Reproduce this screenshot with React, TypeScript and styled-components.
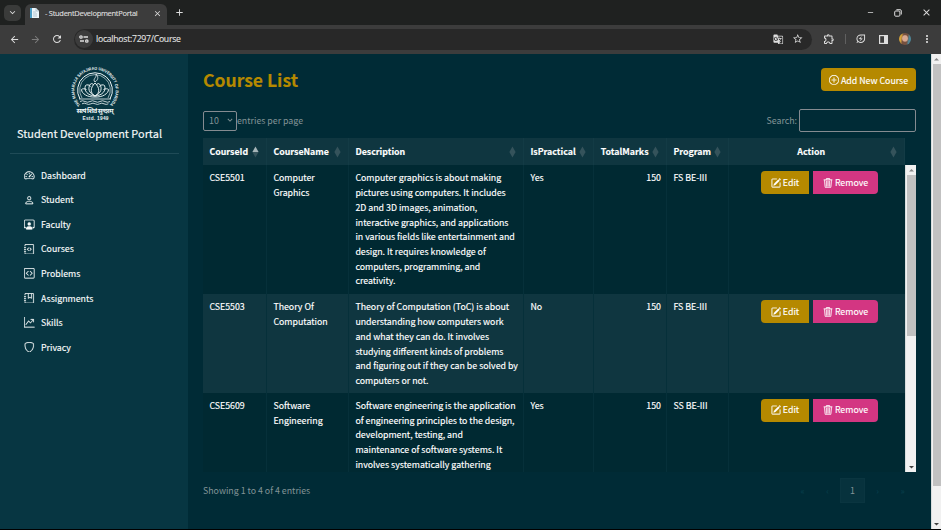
import React from "react";
import styled, { createGlobalStyle } from "styled-components";
import {
  BsSpeedometer2, BsPerson, BsPersonWorkspace, BsJournalCode, BsCodeSquare, BsJournalBookmark,
  BsGraphUpArrow, BsShield, BsPlusCircle, BsPencilSquare, BsTrash3,
} from "react-icons/bs";
import {
  MdArrowBack, MdArrowForward, MdRefresh, MdStarBorder, MdGTranslate, MdOutlineExtension,
  MdMoreVert, MdClose, MdAdd, MdKeyboardArrowDown, MdRemove, MdOutlineEnergySavingsLeaf,
} from "react-icons/md";

const Global = createGlobalStyle`
  * { box-sizing: border-box; }
  body { margin: 0; background: #002b36; font-family: "Noto Sans CJK JP", "Noto Sans", sans-serif; }
  button, input { font: inherit; }
`;

const Window = styled.div`
  width: 941px; height: 530px; display: flex; flex-direction: column; overflow: hidden;
  border-bottom: 1px solid #000;
`;

/* ---- browser chrome ---- */
const TabBar = styled.div`
  height: 25px; flex: none; background: #1f2120; display: flex; align-items: center; color: #dcdcdc;
  font-family: "Open Sans", sans-serif;
`;
const TabSearch = styled.div`
  width: 17px; height: 16px; margin-left: 4px; border-radius: 5px; background: #3a3b3a;
  display: grid; place-items: center; font-size: 11px;
`;
const Tab = styled.div`
  width: 142px; height: 21px; margin: 4px 0 0 4px; padding: 0 5px 3px 4px; border-radius: 6px 6px 0 0;
  background: #3c3c3c; display: flex; align-items: center; font-size: 7.5px; letter-spacing: -0.28px;
  -webkit-text-stroke: 0.15px currentColor;
`;
const TabTitle = styled.span`flex: 1; margin-left: 5px; white-space: nowrap;`;
const Glyph = styled.span<{ $size: number; $w: number; $dim?: boolean }>`
  width: ${p => p.$w}px; flex: none; display: grid; place-items: center; font-size: ${p => p.$size}px;
  color: ${p => (p.$dim ? "#7d7d7d" : "#dedede")};
`;
const WindowButtons = styled.div`margin-left: auto; display: flex; padding-right: 1px;`;
const Toolbar = styled.div`
  height: 29px; flex: none; background: #3c3c3c; display: flex; align-items: center; padding: 0 0 1px 3px;
`;
const Address = styled.div`
  width: 738px; height: 21px; margin-left: 6px; border-radius: 11px; background: #282828; display: flex;
  align-items: center; color: #e4e4e4; font: 8.7px "Open Sans", sans-serif; padding: 0 4px 0 1px;
`;
const SiteInfo = styled.span`
  width: 18px; height: 18px; border-radius: 50%; background: #3c3c3c; display: grid; place-items: center;
`;
const Url = styled.span`flex: 1; margin-left: 3px; letter-spacing: -0.27px; -webkit-text-stroke: 0.1px currentColor;`;
const Divider = styled.span`width: 1px; height: 10px; background: #606060; margin-right: 4px;`;
const Avatar = styled.span`
  width: 12px; height: 12px; border-radius: 50%; margin: 0 5px;
  background: radial-gradient(ellipse at 50% 45%, #d8a891 0 28%, transparent 42%),
    linear-gradient(100deg, #d5a33a 0 20%, #75503f 35% 65%, #4e879a 80%);
`;

/* ---- page ---- */
const Page = styled.div`
  flex: 1; min-height: 0; display: flex; background: #002b36; -webkit-text-stroke: 0.15px currentColor;
`;
const Sidebar = styled.aside`
  width: 188px; flex: none; background: #073642; padding: 12px 9px 0 10px; color: #f7fafa;
`;
const Brand = styled.div`
  height: 88px; display: flex; flex-direction: column; align-items: center; border-bottom: 1px solid #1f4b57;
  svg { flex: none; }
`;
const BrandName = styled.div`font-size: 10.95px; line-height: 18px; margin: 2px 10px 0 0; white-space: nowrap;`;
const Nav = styled.nav`margin-top: 9px; padding-left: 14px;`;
const NavItem = styled.a`
  height: 24.55px; display: flex; align-items: center; gap: 6.5px; font-size: 8.8px;
  svg { font-size: 10.5px; stroke: currentColor; stroke-width: .3; }
`;
const Main = styled.main`flex: 1; padding: 14px 15px 0; display: flex; flex-direction: column;`;
const Heading = styled.div`display: flex; justify-content: space-between; height: 25px;`;
const Title = styled.h1`margin: -1px 0 0; color: #b58900; font-size: 17.55px; line-height: 25px; font-weight: 700;`;
const Button = styled.button<{ $kind: "gold" | "pink"; $w: number; $corners?: string }>`
  width: ${p => p.$w}px; height: 23px; border: 0; padding: 1px 0 0; color: #fff; font-size: 8.8px;
  border-radius: ${p => p.$corners ?? "4px"}; background: ${p => (p.$kind === "gold" ? "#b58900" : "#d33682")};
  display: flex; align-items: center; justify-content: center; gap: 2px; white-space: nowrap;
  svg { font-size: 10px; stroke: currentColor; stroke-width: .4; margin-top: -1px; }
`;
const Controls = styled.div`
  display: flex; justify-content: space-between; align-items: center; height: 23px; margin-top: 16px;
  color: #839496; font-size: 8.8px; -webkit-text-stroke: 0;
`;
const Group = styled.label`display: flex; align-items: center; line-height: 13px;`;
const Select = styled.span`
  width: 34px; height: 20px; border: 1px solid #858b91; border-radius: 2px; padding: 0 1px 1px 5px;
  display: flex; align-items: center; justify-content: space-between;
`;
const SearchInput = styled.input`
  width: 117px; height: 23px; margin-left: 2px; border: 1px solid #858b91; border-radius: 2px; background: transparent;
`;
const columns = "64px 82px 175px 70px 73px 62px 176px";
const HeadRow = styled.div`
  display: grid; grid-template-columns: ${columns}; width: 702px; height: 27px; margin-top: 6px; flex: none;
  background: #0f3640; color: #fff; font-size: 8.8px; font-weight: 700;
`;
const HeadCell = styled.div<{ $center?: boolean; $right?: boolean }>`
  display: flex; align-items: center; padding: 0 7px 0 6.4px; border-right: 1px solid #133b45;
  span { flex: 1; text-align: ${p => (p.$center ? "center" : p.$right ? "right" : "left")};
    padding-right: ${p => (p.$right ? 3.5 : p.$center ? 3 : 0)}px; }
`;
const SortIcon = styled.svg`width: 7px; height: 12px; flex: none;`;
const Viewport = styled.div`display: flex; height: 307px; flex: none; overflow: hidden;`;
const Body = styled.div`width: 702px; flex: none; overflow: hidden;`;
const Row = styled.div<{ $alt?: boolean; $h: number }>`
  display: grid; grid-template-columns: ${columns}; height: ${p => p.$h}px;
  background: ${p => (p.$alt ? "#0f3640" : "#002932")}; color: #fff;
  font-size: 8.8px; line-height: 14.7px;
`;
const Cell = styled.div<{ $right?: boolean }>`
  padding: 6.4px 5px 0 6.4px; border-right: 1px solid #06303a; text-align: ${p => (p.$right ? "right" : "left")};
  white-space: nowrap;
`;
const Actions = styled.div`display: flex; justify-content: center; gap: 4px; padding: 6px 0 0 5px;`;
const Track = styled.div<{ $w: number }>`
  width: ${p => p.$w}px; flex: none; background: #f1f1f1; display: flex; flex-direction: column; align-items: center;
  justify-content: space-between; border-left: 1px solid #d8dddd;
`;
const Thumb = styled.div<{ $h: number; $w: number }>`width: ${p => p.$w}px; height: ${p => p.$h}px; background: #c1c1c1;`;
const ThumbArea = styled.div`flex: 1;`;
const Arrow = styled.svg`width: 9px; height: 10px; flex: none;`;
const Footer = styled.div`
  display: flex; justify-content: space-between; align-items: center; margin-top: 6px; height: 25px;
  color: #839496; font-size: 8.8px; -webkit-text-stroke: 0;
`;
const Pager = styled.div`display: flex; align-items: center; padding-right: 1px;`;
const PageMark = styled.span<{ $active?: boolean }>`
  width: 25px; height: 25px; display: grid; place-items: center; color: ${p => (p.$active ? "#839496" : "#08404d")};
  border: ${p => (p.$active ? "1px solid #0a3540" : "0")}; background: ${p => (p.$active ? "#07323d" : "transparent")};
`;

const Crest = () => (
  <svg width="58" height="56" viewBox="0 0 58 56" fill="none" stroke="#edf5f6" overflow="visible">
    <defs><path id="crestArc" d="M14.4 39 A 20.6 20.6 0 1 1 43.6 39" /></defs>
    <text fill="#edf5f6" stroke="none" fontSize="4.2" fontWeight="700" fontFamily="Liberation Sans, sans-serif">
      <textPath href="#crestArc" textLength="96" lengthAdjust="spacingAndGlyphs">THE MAHARAJA SAYAJIRAO UNIVERSITY OF BARODA</textPath>
    </text>
    <path d="M14 33 A 17.4 17.4 0 1 1 44 33" strokeWidth="1" />
    <path d="M16 32 A 15.3 15.3 0 1 1 42 32" strokeWidth=".6" />
    <path d="M13 33h32M14 35.5q2.5-1.5 5 0t5 0 5 0 5 0 5 0 5 0M16 37.8q2.2-1.3 4.4 0t4.4 0 4.4 0 4.4 0 4.4 0 4.4 0" strokeWidth=".8" />
    <path d="M29 17c-5 5-5 10 0 13c5-3 5-8 0-13ZM24.5 18c-3 4-2 9 4.5 12c6.5-3 7.5-8 4.5-12c-1-1-3 0-3 1M24.5 18c1-1 3 0 3 1M19.5 19.5c-2 5 2 10 9.500 10.500c7.500-.5 11.500-5.500 9.500-10.500c-1-1-4-1-5 1M19.500 19.500c1-1 4-1 5 1M15.500 23.500c0 4 6 8 13.500 7.500c7.500.5 13.500-3.500 13.500-7.500c-1-1-3-1-5 0M15.500 23.500c1-1 3-1 5 0" strokeWidth=".95" />
    <path d="M29 16c-3-3 2-4 1-8c3 3 2 6-1 8Z" strokeWidth=".8" />
    <text x="29" y="47.1" textAnchor="middle" fill="#edf5f6" stroke="none" fontSize="6.6" fontWeight="700" textLength="37" fontFamily="Noto Sans, sans-serif">सत्यं शिवं सुन्दरम्</text>
    <text x="29.5" y="54" textAnchor="middle" fill="#edf5f6" stroke="none" fontSize="4.8" fontWeight="700" textLength="26" fontFamily="Liberation Sans, sans-serif">Estd. 1949</text>
  </svg>
);

const Sort = ({ up }: { up?: boolean }) => (
  <SortIcon viewBox="0 0 7 12">
    <path d="M3.5 .5 6.6 6H.4Z" fill={up ? "#a6b5b8" : "#35535b"} />
    <path d="M3.5 11.5 6.6 6H.4Z" fill="#35535b" />
  </SortIcon>
);

const ScrollArrow = ({ down }: { down?: boolean }) => (
  <Arrow viewBox="0 0 9 10"><path d={down ? "M2 4h5L4.5 6.5Z" : "M2 6.5h5L4.5 4Z"} fill={down ? "#404040" : "#888"} /></Arrow>
);

const Scrollbar = ({ width, thumb }: { width: number; thumb: number }) => (
  <Track $w={width}>
    <ScrollArrow />
    <ThumbArea><Thumb $w={width - 2} $h={thumb} /></ThumbArea>
    <ScrollArrow down />
  </Track>
);

const nav = [
  ["Dashboard", BsSpeedometer2], ["Student", BsPerson], ["Faculty", BsPersonWorkspace], ["Courses", BsJournalCode],
  ["Problems", BsCodeSquare], ["Assignments", BsJournalBookmark], ["Skills", BsGraphUpArrow], ["Privacy", BsShield],
] as const;

const courses = [
  {
    id: "CSE5501", name: ["Computer", "Graphics"], practical: "Yes", program: "FS BE-III", height: 129,
    text: ["Computer graphics is about making", "pictures using computers. It includes", "2D and 3D images, animation,",
      "interactive graphics, and applications", "in various fields like entertainment and", "design. It requires knowledge of",
      "computers, programming, and", "creativity."],
  },
  {
    id: "CSE5503", name: ["Theory Of", "Computation"], practical: "No", program: "FS BE-III", height: 98.5,
    text: ["Theory of Computation (ToC) is about", "understanding how computers work", "and what they can do. It involves",
      "studying different kinds of problems", "and figuring out if they can be solved by", "computers or not."],
  },
  {
    id: "CSE5609", name: ["Software", "Engineering"], practical: "Yes", program: "SS BE-III", height: 79.5,
    text: ["Software engineering is the application", "of engineering principles to the design,", "development, testing, and",
      "maintenance of software systems. It", "involves systematically gathering"],
  },
];

const Lines = ({ items }: { items: string[] }) => <>{items.map(t => <div key={t}>{t}</div>)}</>;

export default function App() {
  return (
    <>
      <Global />
      <Window>
        <TabBar>
          <TabSearch><MdKeyboardArrowDown /></TabSearch>
          <Tab>
            <svg width="11" height="12" viewBox="0 0 11 12">
              <path d="M1 1h6l3 3v7H1Z" fill="#edf5fa" /><path d="M1 1h2v10H1Z" fill="#4d9fc7" />
              <path d="M7 1v3h3M4 5h3M4 7h4M4 9h4" stroke="#9eb5c0" strokeWidth=".7" fill="none" />
            </svg>
            <TabTitle>- StudentDevelopmentPortal</TabTitle>
            <MdClose size={9} />
          </Tab>
          <Glyph $size={11} $w={24}><MdAdd /></Glyph>
          <WindowButtons>
            <Glyph $size={9} $w={28}><MdRemove /></Glyph>
            <Glyph $size={8} $w={28}>
              <svg width="8" height="8" viewBox="0 0 8 8" fill="none" stroke="#dedede"><rect x=".7" y="2" width="5.2" height="5.2" rx="1" /><path d="M2.4.7h3.7q1.2 0 1.2 1.2v3.6" /></svg>
            </Glyph>
            <Glyph $size={11} $w={28}><MdClose /></Glyph>
          </WindowButtons>
        </TabBar>
        <Toolbar>
          <Glyph $size={11} $w={22}><MdArrowBack /></Glyph>
          <Glyph $size={11} $w={21} $dim><MdArrowForward /></Glyph>
          <Glyph $size={12} $w={22}><MdRefresh /></Glyph>
          <Address>
            <SiteInfo>
              <svg width="10" height="8" viewBox="0 0 10 8" fill="none" stroke="#dedede" strokeWidth="1.3">
                <circle cx="2" cy="2" r="1.2" /><path d="M4.5 2H9M1 6h4" /><circle cx="7.8" cy="6" r="1.2" />
              </svg>
            </SiteInfo>
            <Url>localhost:7297/Course</Url>
            <Glyph $size={10.5} $w={19}><MdGTranslate /></Glyph>
            <Glyph $size={11.5} $w={20}><MdStarBorder /></Glyph>
          </Address>
          <Glyph $size={12} $w={33}><MdOutlineExtension /></Glyph>
          <Divider />
          <Glyph $size={11.5} $w={22}><MdOutlineEnergySavingsLeaf /></Glyph>
          <Glyph $size={9} $w={22}>
            <svg width="9" height="9" viewBox="0 0 9 9"><rect x=".6" y=".6" width="7.8" height="7.8" fill="none" stroke="#dedede" strokeWidth="1.2" /><path d="M5 1h3.5v7H5Z" fill="#dedede" /></svg>
          </Glyph>
          <Avatar />
          <Glyph $size={12} $w={22}><MdMoreVert /></Glyph>
        </Toolbar>
        <Page>
          <Sidebar>
            <Brand><Crest /><BrandName>Student Development Portal</BrandName></Brand>
            <Nav>{nav.map(([label, Icon]) => <NavItem key={label}><Icon />{label}</NavItem>)}</Nav>
          </Sidebar>
          <Main>
            <Heading>
              <Title>Course List</Title>
              <Button $kind="gold" $w={95}><BsPlusCircle />Add New Course</Button>
            </Heading>
            <Controls>
              <Group><Select>10<MdKeyboardArrowDown size={10} /></Select>entries per page</Group>
              <Group>Search:<SearchInput aria-label="Search" /></Group>
            </Controls>
            <HeadRow>
              <HeadCell><span>CourseId</span><Sort up /></HeadCell>
              <HeadCell><span>CourseName</span><Sort /></HeadCell>
              <HeadCell><span>Description</span><Sort /></HeadCell>
              <HeadCell><span>IsPractical</span><Sort /></HeadCell>
              <HeadCell $right><span>TotalMarks</span><Sort /></HeadCell>
              <HeadCell><span>Program</span><Sort /></HeadCell>
              <HeadCell $center><span>Action</span><Sort /></HeadCell>
            </HeadRow>
            <Viewport>
              <Body>
                {courses.map((c, i) => (
                  <Row key={c.id} $alt={i === 1} $h={c.height}>
                    <Cell>{c.id}</Cell>
                    <Cell><Lines items={c.name} /></Cell>
                    <Cell><Lines items={c.text} /></Cell>
                    <Cell>{c.practical}</Cell>
                    <Cell $right>150</Cell>
                    <Cell>{c.program}</Cell>
                    <Actions>
                      <Button $kind="gold" $w={48} $corners="4px 0 0 4px"><BsPencilSquare />Edit</Button>
                      <Button $kind="pink" $w={65} $corners="0 4px 4px 0"><BsTrash3 />Remove</Button>
                    </Actions>
                  </Row>
                ))}
              </Body>
              <Scrollbar width={11} thumb={161} />
            </Viewport>
            <Footer>
              <span>Showing 1 to 4 of 4 entries</span>
              <Pager>
                <PageMark>«</PageMark><PageMark>‹</PageMark><PageMark $active>1</PageMark><PageMark>›</PageMark><PageMark>»</PageMark>
              </Pager>
            </Footer>
          </Main>
          <Scrollbar width={10} thumb={422} />
        </Page>
      </Window>
    </>
  );
}
